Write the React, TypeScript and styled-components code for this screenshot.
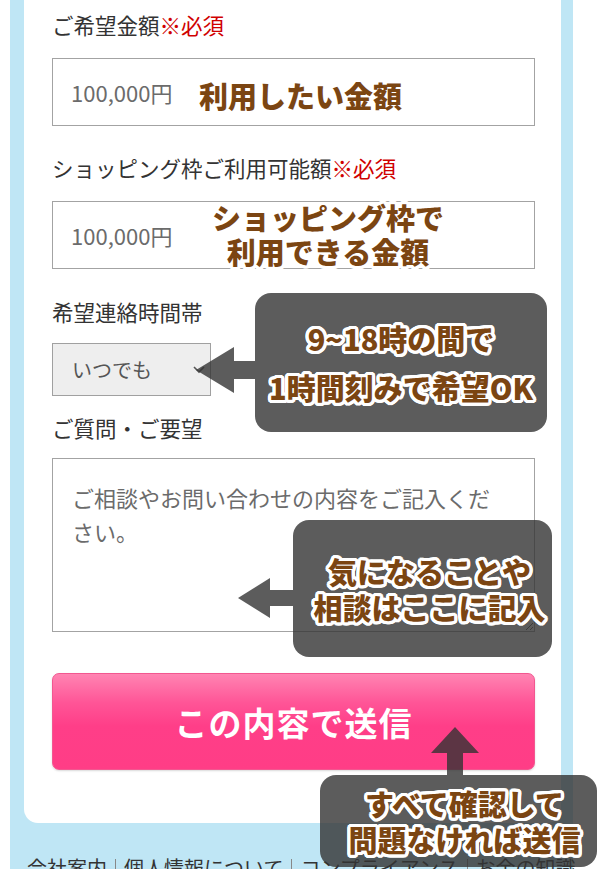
import React from "react";
import styled, { createGlobalStyle } from "styled-components";

const GlobalStyle = createGlobalStyle`
  html, body {
    margin: 0;
    padding: 0;
    background: #fff;
    overflow: hidden;
  }
  body {
    font-family: "Noto Sans CJK JP", "Noto Sans", sans-serif;
  }
`;

// white ring round the brown note text
const outline = (r: number) =>
  Array.from({ length: 24 }, (_, i) => {
    const a = (i / 24) * Math.PI * 2;
    return `${(Math.cos(a) * r).toFixed(2)}px ${(Math.sin(a) * r).toFixed(2)}px 0 #fff`;
  }).join(", ");

const Page = styled.div`
  position: relative;
  width: 600px;
  height: 869px;
  overflow: hidden;
  padding-left: 10px;
  box-sizing: border-box;
`;

const Frame = styled.div`
  width: 563px;
  min-height: 869px;
  box-sizing: border-box;
  padding: 0 12px 0 14px;
  background: #bfe6f5;
`;

const Card = styled.div`
  background: #fff;
  border-radius: 0 0 14px 14px;
  padding: 10px 26px 53px 28px;
`;

const Field = styled.div<{ $gap: number }>`
  margin-bottom: ${(p) => p.$gap}px;
`;

const Label = styled.div<{ $gap: number }>`
  font-size: 21.5px;
  line-height: 30px;
  color: #333;
  margin-bottom: ${(p) => p.$gap}px;
  white-space: nowrap;
`;

const Required = styled.span`
  color: #d00000;
`;

const TextInput = styled.input`
  display: block;
  width: 100%;
  height: 68px;
  box-sizing: border-box;
  border: 1px solid #a3a3a3;
  padding: 0 18px;
  font-family: inherit;
  font-size: 22px;
  color: #555;
  outline: none;

  &::placeholder {
    color: #6b6b6b;
  }
`;

const SelectWrap = styled.div`
  position: relative;
  width: 159px;
`;

const Select = styled.select`
  display: block;
  width: 100%;
  height: 53px;
  box-sizing: border-box;
  appearance: none;
  border: 1px solid #a0a0a0;
  border-radius: 0;
  background: #eee;
  padding: 0 19px;
  font-family: inherit;
  font-size: 20px;
  color: #555;
`;

const Chevron = styled.svg`
  position: absolute;
  right: 6px;
  top: 21px;
  pointer-events: none;
`;

const TextArea = styled.textarea`
  display: block;
  width: 100%;
  height: 174px;
  box-sizing: border-box;
  border: 1px solid #a3a3a3;
  padding: 21px 30px 0 19px;
  font-family: inherit;
  font-size: 22px;
  line-height: 34px;
  color: #555;
  resize: vertical;
  outline: none;

  &::placeholder {
    color: #6b6b6b;
  }
`;

const SubmitButton = styled.button`
  display: block;
  width: 100%;
  height: 97px;
  border: 1px solid #f25790;
  border-radius: 7px;
  background: linear-gradient(#ff84b2 0%, #ff5597 30%, #ff3e88 55%, #ff3d86 100%);
  box-shadow: 0 1px 2px rgba(0, 0, 0, 0.15);
  color: #fff;
  font-family: inherit;
  font-size: 33px;
  font-weight: 700;
  letter-spacing: 1px;
  cursor: pointer;
`;

const Footer = styled.div`
  margin-top: 29px;
  padding-left: 3px;
  font-size: 20px;
  line-height: 32px;
  color: #333;
  white-space: nowrap;
`;

const Sep = styled.span`
  display: inline-block;
  width: 1px;
  height: 20px;
  margin: 0 8px;
  vertical-align: -3px;
  background: #888;
`;

const NoteText = styled.div<{ $lh: number }>`
  font-family: "Noto Sans CJK JP", sans-serif;
  font-size: 29px;
  font-weight: 900;
  line-height: ${(p) => p.$lh}px;
  color: #7b4512;
  text-shadow: ${outline(3.2)};
  white-space: nowrap;
  text-align: center;
`;

const Note = styled.div<{ $x: number; $y: number; $w?: number }>`
  position: absolute;
  left: ${(p) => p.$x}px;
  top: ${(p) => p.$y}px;
  ${(p) => (p.$w ? `width: ${p.$w}px;` : "")}
`;

const Callout = styled.div<{ $x: number; $y: number; $w: number; $h: number; $shift?: number }>`
  position: absolute;
  left: ${(p) => p.$x}px;
  top: ${(p) => p.$y}px;
  width: ${(p) => p.$w}px;
  height: ${(p) => p.$h}px;
  box-sizing: border-box;
  padding-left: ${(p) => p.$shift ?? 0}px;
  border-radius: 16px;
  background: rgba(51, 51, 51, 0.8);
  display: flex;
  flex-direction: column;
  align-items: center;
  justify-content: center;
`;

const Arrow = styled.svg<{ $x: number; $y: number }>`
  position: absolute;
  left: ${(p) => p.$x}px;
  top: ${(p) => p.$y}px;
`;

const SHADE = "rgba(51, 51, 51, 0.8)";

export default function App() {
  return (
    <>
      <GlobalStyle />
      <Page>
        <Frame>
          <Card>
            <Field $gap={27}>
              <Label $gap={18}>
                ご希望金額<Required>※必須</Required>
              </Label>
              <TextInput placeholder="100,000円" />
            </Field>
            <Field $gap={28}>
              <Label $gap={18}>
                ショッピング枠ご利用可能額<Required>※必須</Required>
              </Label>
              <TextInput placeholder="100,000円" />
            </Field>
            <Field $gap={17}>
              <Label $gap={16}>希望連絡時間帯</Label>
              <SelectWrap>
                <Select defaultValue="any">
                  <option value="any">いつでも</option>
                  <option value="9">9時〜10時</option>
                  <option value="10">10時〜11時</option>
                </Select>
                <Chevron width="12" height="10" viewBox="0 0 12 10">
                  <path d="M1 3 L6 8 L11 3" fill="none" stroke="#555" strokeWidth="1.6" />
                </Chevron>
              </SelectWrap>
            </Field>
            <Field $gap={41}>
              <Label $gap={15}>ご質問・ご要望</Label>
              <TextArea placeholder="ご相談やお問い合わせの内容をご記入ください。" />
            </Field>
            <SubmitButton type="button">この内容で送信</SubmitButton>
          </Card>
          <Footer>
            会社案内<Sep />個人情報について<Sep />コンプライアンス<Sep />お金の知識
          </Footer>
        </Frame>

        <Note $x={199} $y={75}>
          <NoteText $lh={40}>利用したい金額</NoteText>
        </Note>
        <Note $x={200} $y={200} $w={256}>
          <NoteText $lh={34}>
            ショッピング枠で
            <br />
            利用できる金額
          </NoteText>
        </Note>

        <Arrow $x={196} $y={347} width="59" height="46" viewBox="0 0 59 46">
          <path d="M0 23 L38 0 L38 14 L59 14 L59 32 L38 32 L38 46 Z" fill={SHADE} />
        </Arrow>
        <Callout $x={255} $y={293} $w={292} $h={139}>
          <NoteText $lh={49}>9~18時の間で</NoteText>
          <NoteText $lh={49}>1時間刻みで希望OK</NoteText>
        </Callout>

        <Arrow $x={238} $y={578} width="55" height="40" viewBox="0 0 55 40">
          <path d="M0 20 L32 0 L32 12 L55 12 L55 28 L32 28 L32 40 Z" fill={SHADE} />
        </Arrow>
        <Callout $x={293} $y={520} $w={259} $h={137} $shift={14}>
          <NoteText $lh={36}>気になることや</NoteText>
          <NoteText $lh={36}>相談はここに記入</NoteText>
        </Callout>

        <Arrow $x={431} $y={727} width="48" height="48" viewBox="0 0 48 48">
          <path d="M24 0 L48 26 L32 26 L32 48 L16 48 L16 26 L0 26 Z" fill={SHADE} />
        </Arrow>
        <Callout $x={320} $y={775} $w={277} $h={92} $shift={12}>
          <NoteText $lh={36}>すべて確認して</NoteText>
          <NoteText $lh={36}>問題なければ送信</NoteText>
        </Callout>
      </Page>
    </>
  );
}
